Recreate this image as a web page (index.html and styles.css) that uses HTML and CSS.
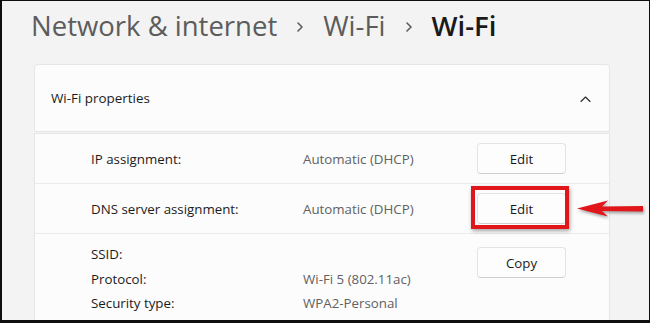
FILE: index.html
```html
<!DOCTYPE html>
<html>
<head>
<meta charset="utf-8">
<link rel="stylesheet" href="styles.css">
</head>
<body>
<div class="frame">
  <h1 class="crumbs">
    <span class="crumb">Network &amp; internet</span>
    <svg class="sep" width="6" height="10" viewBox="0 0 6 10"><path d="M1 1 L5 5 L1 9" fill="none" stroke="#5c5c5c" stroke-width="1.6" stroke-linecap="round" stroke-linejoin="round"/></svg>
    <span class="crumb">Wi-Fi</span>
    <svg class="sep" width="6" height="10" viewBox="0 0 6 10"><path d="M1 1 L5 5 L1 9" fill="none" stroke="#5c5c5c" stroke-width="1.6" stroke-linecap="round" stroke-linejoin="round"/></svg>
    <span class="crumb current">Wi-Fi</span>
  </h1>

  <section class="card head">
    <span class="head-title">Wi-Fi properties</span>
    <svg class="chev-up" width="11" height="6" viewBox="0 0 11 6"><path d="M1 5.5 L5.5 1 L10 5.5" fill="none" stroke="#2b2b2b" stroke-width="1.1" stroke-linecap="round" stroke-linejoin="round"/></svg>
  </section>

  <section class="card rows">
    <div class="row">
      <span class="label">IP assignment:</span>
      <span class="value">Automatic (DHCP)</span>
      <button class="btn">Edit</button>
    </div>
    <div class="row">
      <span class="label">DNS server assignment:</span>
      <span class="value">Automatic (DHCP)</span>
      <div class="btn-wrap">
        <button class="btn">Edit</button>
        <span class="highlight"></span>
        <svg class="arrow" width="70" height="22" viewBox="0 0 70 22"><path d="M2 10.5 L33 2.5 L27 8.5 L68 8 L68 13.5 L27 13 L33 18.5 Z" fill="#e0161b"/></svg>
      </div>
    </div>
    <div class="info">
      <span class="label">SSID:</span>
      <span class="value"></span>
      <button class="btn copy">Copy</button>
      <span class="label">Protocol:</span>
      <span class="value">Wi-Fi 5 (802.11ac)</span>
      <span class="label">Security type:</span>
      <span class="value">WPA2-Personal</span>
    </div>
  </section>
</div>
</body>
</html>
```

FILE: styles.css
```css
html, body {
  margin: 0;
  padding: 0;
}
body {
  background: #f3f3f3;
  font-family: "Open Sans", "Noto Sans", sans-serif;
}
.frame {
  width: 650px;
  height: 323px;
  box-sizing: border-box;
  border-style: solid;
  border-color: #0e0e0e;
  border-width: 1px 1px 3px 2px;
  background: #f3f3f3;
  overflow: hidden;
}
.crumbs {
  margin: 0;
  padding: 7px 0 0 29px;
  height: 36px;
  display: flex;
  align-items: center;
  gap: 20px;
  font-size: 27.5px;
  line-height: 36px;
  font-weight: 400;
  color: #5c5c5c;
  white-space: nowrap;
}
.crumb.current {
  color: #1a1a1a;
  font-weight: 600;
}
.sep {
  flex: none;
  margin-top: 1px;
}
.card {
  margin-left: 32px;
  width: 576px;
  box-sizing: border-box;
  background: #fcfcfc;
  border: 1px solid #e6e6e6;
}
.head {
  margin-top: 20px;
  height: 68px;
  border-radius: 4px 4px 0 0;
  display: flex;
  align-items: center;
  justify-content: space-between;
  padding: 0 18px 0 16px;
}
.head-title {
  font-size: 13.4px;
  color: #1b1b1b;
}
.chev-up {
  margin-top: 1px;
}
.rows {
  margin-top: 1px;
  height: 260px;
}
.row {
  display: grid;
  grid-template-columns: 212px 1fr 89px;
  align-items: center;
  height: 50px;
  box-sizing: border-box;
  border-bottom: 1px solid #ebebeb;
  padding: 0 43px 0 56px;
}
.label {
  font-size: 13.3px;
  color: #1b1b1b;
}
.value {
  font-size: 13.3px;
  color: #616161;
}
.btn {
  width: 89px;
  height: 31px;
  box-sizing: border-box;
  margin: 0;
  padding: 0;
  background: #fdfdfd;
  border: 1px solid #e3e3e3;
  border-bottom-color: #cfcfcf;
  border-radius: 4px;
  font-family: "Open Sans", "Noto Sans", sans-serif;
  font-size: 13.3px;
  color: #1b1b1b;
}
.btn-wrap {
  position: relative;
  width: 89px;
  height: 31px;
}
.highlight {
  position: absolute;
  left: -6px;
  right: -3px;
  top: -7px;
  bottom: -5px;
  border: 4px solid #e0161b;
  box-shadow: 1px 2px 4px rgba(0, 0, 0, 0.35);
}
.arrow {
  position: absolute;
  left: calc(100% + 9px);
  top: 5px;
  filter: drop-shadow(1px 2px 1.5px rgba(0, 0, 0, 0.35));
}
.info {
  display: grid;
  grid-template-columns: 212px 1fr 89px;
  grid-auto-rows: 24.5px;
  align-items: center;
  padding: 8px 43px 0 56px;
}
.info .copy {
  grid-column: 3;
  grid-row: 1 / span 2;
  align-self: start;
  margin-top: 5px;
}
```
